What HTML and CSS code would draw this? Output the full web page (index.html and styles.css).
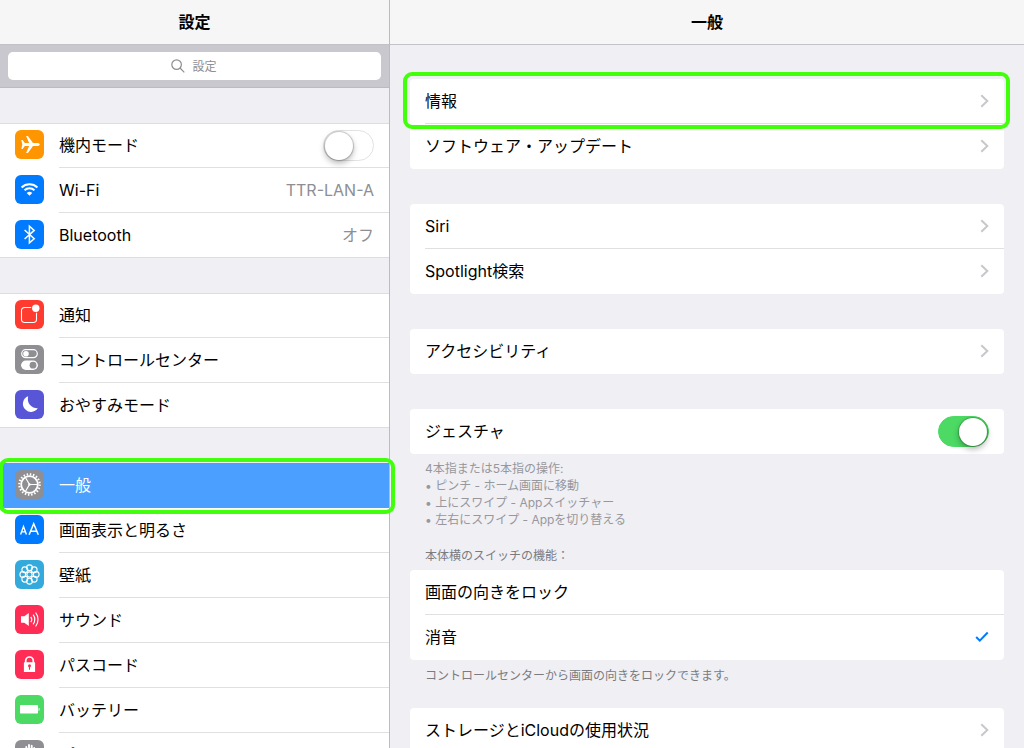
FILE: index.html
```html
<!DOCTYPE html>
<html lang="ja">
<head>
<meta charset="utf-8">
<meta name="viewport" content="width=device-width, initial-scale=1">
<title>設定</title>
<link rel="stylesheet" href="styles.css">
</head>
<body>
<svg class="sprite" aria-hidden="true">
  <symbol id="chevron" viewBox="0 0 9 14"><path d="M1.3 1.2 7.3 7l-6 5.8" fill="none" stroke="#c7c7cc" stroke-width="2"/></symbol>
</svg>
<div class="app">
  <aside class="sidebar">
    <header class="bar"><h1 class="title">設定</h1></header>
    <div class="search">
      <svg class="search-icon" viewBox="0 0 14 14" aria-hidden="true"><circle cx="5.6" cy="5.6" r="4.8"/><path d="m9 9 4.3 4.3"/></svg>
      <input class="search-input" type="search" placeholder="設定" aria-label="設定を検索">
    </div>
    <nav class="groups">
      <ul class="group">
        <li><label class="row">
          <svg class="icon orange" viewBox="0 0 29 29" aria-hidden="true"><path fill="#fff" d="M6.3 10.1h1.3l2.2 3h4.3L11.1 6h1.8l5.1 7.1h4.6c1.4 0 2.1.8 2.1 1.4s-.7 1.4-2.1 1.4H18L12.9 23h-1.8l3-7.1H9.8l-2.2 3H6.3l1-4.4z"/></svg>
          <span class="row-body"><span>機内モード</span><input class="switch" type="checkbox" role="switch"></span>
        </label></li>
        <li><a class="row" href="#wifi">
          <svg class="icon blue" viewBox="0 0 29 29" aria-hidden="true"><g fill="none" stroke="#fff" stroke-width="2"><path d="M6.6 12.5a11.4 11.4 0 0 1 15.8 0"/><path d="M9.5 15.3a7.2 7.2 0 0 1 10 0"/></g><path fill="#fff" d="M11.7 18a4.1 4.1 0 0 1 5.6 0l-2.8 2.8z"/></svg>
          <span class="row-body"><span>Wi-Fi</span><span class="value">TTR-LAN-A</span></span>
        </a></li>
        <li><a class="row" href="#bluetooth">
          <svg class="icon blue" viewBox="0 0 29 29" aria-hidden="true"><path fill="none" stroke="#fff" stroke-width="1.5" d="m9.6 10 9.6 8.7-4.8 4.2V6.2l4.8 4.2L9.6 19"/></svg>
          <span class="row-body"><span>Bluetooth</span><span class="value">オフ</span></span>
        </a></li>
      </ul>
      <ul class="group">
        <li><a class="row" href="#notifications">
          <svg class="icon red" viewBox="0 0 29 29" aria-hidden="true"><path fill="none" stroke="#fff" stroke-width="1.1" d="M16.2 7.5H9.7a3.2 3.2 0 0 0-3.2 3.2v8.6a3.2 3.2 0 0 0 3.2 3.2h8.6a3.2 3.2 0 0 0 3.2-3.2v-6.5"/><circle cx="20.8" cy="8.2" r="3.7" fill="#fff"/></svg>
          <span class="row-body"><span>通知</span></span>
        </a></li>
        <li><a class="row" href="#control-center">
          <svg class="icon gray" viewBox="0 0 29 29" aria-hidden="true"><rect x="6.7" y="4.7" width="15.6" height="8" rx="4" fill="none" stroke="#fff" stroke-width="1.2"/><circle cx="11" cy="8.7" r="2.8" fill="#fff"/><rect x="6.1" y="15.5" width="16.8" height="9.4" rx="4.7" fill="#fff"/><circle cx="18" cy="20.2" r="3.4" fill="#8e8e93"/></svg>
          <span class="row-body"><span>コントロールセンター</span></span>
        </a></li>
        <li><a class="row" href="#do-not-disturb">
          <svg class="icon purple" viewBox="0 0 29 29" aria-hidden="true"><path fill="#fff" d="M13.2 6.2a9.3 9.3 0 0 0 9.6 12 8.1 8.1 0 1 1-9.6-12z"/></svg>
          <span class="row-body"><span>おやすみモード</span></span>
        </a></li>
      </ul>
      <ul class="group">
        <li class="highlight highlight-nav"><a class="row selected" href="#general" aria-current="page">
          <svg class="icon gray" viewBox="0 0 29 29" aria-hidden="true"><g fill="none" stroke="#fff"><circle cx="14.5" cy="14.5" r="10.2" stroke-width="2.2" stroke-dasharray="1.5 1.7044"/><circle cx="14.5" cy="14.5" r="8.3" stroke-width="1.8"/><path stroke-width="1.2" d="M14.5 14.5H22M14.5 14.5 10.7 8M14.5 14.5 10.7 21"/></g><circle cx="14.5" cy="14.5" r="1.2" fill="#fff"/></svg>
          <span class="row-body"><span>一般</span></span>
        </a></li>
        <li><a class="row" href="#display">
          <svg class="icon blue" viewBox="0 0 29 29" aria-hidden="true"><g fill="none" stroke="#fff"><path stroke-width="1.4" d="m5.6 19.5 2.9-8 2.9 8M6.6 16.9h3.8"/><path stroke-width="1.5" d="m14.1 19.8 4.6-11.2 4.6 11.2M15.6 16.2h6.2"/></g></svg>
          <span class="row-body"><span>画面表示と明るさ</span></span>
        </a></li>
        <li><a class="row" href="#wallpaper">
          <svg class="icon cyan" viewBox="0 0 29 29" aria-hidden="true"><g fill="none" stroke="#fff" stroke-width="1.1"><circle cx="14.5" cy="14.5" r="2.6"/><circle cx="14.5" cy="7.8" r="2.9"/><circle cx="19.2" cy="9.8" r="2.9"/><circle cx="21.2" cy="14.5" r="2.9"/><circle cx="19.2" cy="19.2" r="2.9"/><circle cx="14.5" cy="21.2" r="2.9"/><circle cx="9.8" cy="19.2" r="2.9"/><circle cx="7.8" cy="14.5" r="2.9"/><circle cx="9.8" cy="9.8" r="2.9"/></g></svg>
          <span class="row-body"><span>壁紙</span></span>
        </a></li>
        <li><a class="row" href="#sounds">
          <svg class="icon pink" viewBox="0 0 29 29" aria-hidden="true"><path fill="#fff" d="M6 11.3h3.3l4.5-3.2v12.8l-4.5-3.2H6z"/><g fill="none" stroke="#fff" stroke-width="1.2"><path d="M15.8 11.8a4.6 4.6 0 0 1 0 5.4"/><path d="M18.1 9.7a8 8 0 0 1 0 9.6"/><path d="M20.6 7.5a11.4 11.4 0 0 1 0 14"/></g></svg>
          <span class="row-body"><span>サウンド</span></span>
        </a></li>
        <li><a class="row" href="#passcode">
          <svg class="icon pink" viewBox="0 0 29 29" aria-hidden="true"><path fill="none" stroke="#fff" stroke-width="1.7" d="M10.7 13v-2.2a3.8 3.8 0 0 1 7.6 0V13"/><rect x="8.9" y="12.3" width="11.2" height="9.7" rx=".6" fill="#fff"/><circle cx="14.5" cy="15.8" r="1.5" fill="#ff2d55"/><path stroke="#ff2d55" stroke-width="1.1" d="M14.5 16v3.8"/></svg>
          <span class="row-body"><span>パスコード</span></span>
        </a></li>
        <li><a class="row" href="#battery">
          <svg class="icon green" viewBox="0 0 29 29" aria-hidden="true"><rect x="5" y="10" width="18" height="8.6" rx=".8" fill="#fff"/><path fill="#fff" d="M23.6 12.5c1.4.4 1.4 3.2 0 3.6z"/></svg>
          <span class="row-body"><span>バッテリー</span></span>
        </a></li>
        <li><a class="row" href="#privacy">
          <svg class="icon gray" viewBox="0 0 29 29" aria-hidden="true"><g fill="none" stroke="#fff" stroke-width="1.9" stroke-linecap="round"><path d="M11.3 7v8M14 5v10M16.7 5.8V15M19.2 8v9M8.2 14l3 4"/></g><path fill="#fff" d="M10.3 14h9.8v4c0 4-2 6-5 6s-4-2-6-6z"/></svg>
          <span class="row-body"><span>プライバシー</span></span>
        </a></li>
      </ul>
    </nav>
  </aside>
  <main class="detail">
    <header class="bar"><h2 class="title">一般</h2></header>
    <div class="content">
      <ul class="card">
        <li class="highlight highlight-card"><a class="item" href="#about">情報<svg class="chevron" aria-hidden="true"><use href="#chevron"/></svg></a></li>
        <li><a class="item" href="#software-update">ソフトウェア・アップデート<svg class="chevron" aria-hidden="true"><use href="#chevron"/></svg></a></li>
      </ul>
      <ul class="card">
        <li><a class="item" href="#siri">Siri<svg class="chevron" aria-hidden="true"><use href="#chevron"/></svg></a></li>
        <li><a class="item" href="#spotlight">Spotlight検索<svg class="chevron" aria-hidden="true"><use href="#chevron"/></svg></a></li>
      </ul>
      <ul class="card">
        <li><a class="item" href="#accessibility">アクセシビリティ<svg class="chevron" aria-hidden="true"><use href="#chevron"/></svg></a></li>
      </ul>
      <section class="section">
        <ul class="card">
          <li><label class="item">ジェスチャ<input class="switch" type="checkbox" role="switch" checked></label></li>
        </ul>
        <div class="note light">
          <p>4本指または5本指の操作:</p>
          <p>• ピンチ - ホーム画面に移動</p>
          <p>• 上にスワイプ - Appスイッチャー</p>
          <p>• 左右にスワイプ - Appを切り替える</p>
        </div>
      </section>
      <section class="section side-switch">
        <h3 class="note heading" id="side-switch">本体横のスイッチの機能：</h3>
        <ul class="card" role="radiogroup" aria-labelledby="side-switch">
          <li><label class="item">画面の向きをロック<input class="choice" type="radio" name="side"><svg class="check" viewBox="0 0 14 12" aria-hidden="true"><path d="m1.2 6 3.6 3.6L12.7 1.5"/></svg></label></li>
          <li><label class="item">消音<input class="choice" type="radio" name="side" checked><svg class="check" viewBox="0 0 14 12" aria-hidden="true"><path d="m1.2 6 3.6 3.6L12.7 1.5"/></svg></label></li>
        </ul>
        <p class="note">コントロールセンターから画面の向きをロックできます。</p>
      </section>
      <ul class="card storage">
        <li><a class="item" href="#storage">ストレージとiCloudの使用状況<svg class="chevron" aria-hidden="true"><use href="#chevron"/></svg></a></li>
      </ul>
    </div>
  </main>
</div>
</body>
</html>
```
FILE: styles.css
```css
* {
  box-sizing: border-box;
}

body {
  margin: 0;
  font-family: Inter, "Noto Sans CJK JP", sans-serif;
  font-size: 16px;
  line-height: 24px;
  color: #000;
  background: #efeff4;
}

h1, h2, h3, p, ul {
  margin: 0;
  padding: 0;
}

ul {
  list-style: none;
}

a {
  color: inherit;
  text-decoration: none;
}

.sprite {
  display: none;
}

.app {
  display: grid;
  grid-template-columns: 390px 1fr;
  height: 100vh;
  overflow: hidden;
}

.sidebar {
  position: relative;
  z-index: 1;
  border-right: 1px solid #bcbbc1;
}

.bar {
  display: flex;
  align-items: center;
  justify-content: center;
  height: 45px;
  background: #f6f6f6;
  border-bottom: 1px solid #c3c2c7;
}

.title {
  font-size: 16px;
  font-weight: 700;
}

/* Search */
.search {
  position: relative;
  padding: 7px 8px;
  background: #c9c8ce;
  border-bottom: 1px solid #bcbbc1;
}

.search-icon {
  position: absolute;
  top: 14px;
  left: calc(50% - 24px);
  width: 14px;
  height: 14px;
  fill: none;
  stroke: #8e8e93;
  stroke-width: 1.2;
}

.search-input {
  display: block;
  width: 100%;
  height: 28px;
  padding: 0 0 0 32px;
  border: 0;
  border-radius: 5px;
  background: #fff;
  font: inherit;
  font-size: 12px;
  text-align: center;
}

.search-input::placeholder {
  color: #8e8e93;
  opacity: 1;
}

/* Sidebar rows */
.groups {
  display: grid;
  gap: 35px;
  padding-top: 35px;
}

.group {
  background: #fff;
  box-shadow: inset 0 1px #dddde1, inset 0 -1px #dddde1;
}

.row {
  display: flex;
  gap: 15px;
  padding-left: 15px;
}

.row-body {
  display: flex;
  flex: 1;
  align-items: center;
  justify-content: space-between;
  height: 45px;
  padding-right: 15px;
  border-bottom: 1px solid #e0e0e2;
}

.group li:last-child .row-body {
  border-bottom-color: transparent;
}

.selected {
  color: #fff;
  background: #4b9fff;
}

.selected .row-body {
  border-bottom-color: transparent;
}

.value {
  color: #8e8e93;
}

.icon {
  flex: none;
  width: 29px;
  height: 29px;
  margin-top: 7px;
  border-radius: 6px;
}

.orange { background: #ff9500; }
.blue { background: #007aff; }
.red { background: #ff3b30; }
.gray { background: #8e8e93; }
.purple { background: #5856d6; }
.cyan { background: #34aadc; }
.pink { background: #ff2d55; }
.green { background: #4cd964; }

/* Switch */
.switch {
  appearance: none;
  flex: none;
  display: flex;
  width: 51px;
  height: 31px;
  margin: 0;
  padding: 1px;
  border: 1px solid #e2e2e2;
  border-radius: 16px;
  background: #fff;
}

.switch::before {
  content: "";
  width: 28px;
  height: 28px;
  border-radius: 50%;
  background: #fff;
  box-shadow: 0 0 1px 1px rgba(0, 0, 0, 0.2), 0 3px 6px rgba(0, 0, 0, 0.3);
}

.switch:checked {
  justify-content: flex-end;
  border-color: #4cd964;
  background: #4cd964;
}

/* Detail pane */
.content {
  display: grid;
  gap: 35px;
  padding: 34px 20px;
}

.card {
  background: #fff;
  border-radius: 4px;
}

.item {
  position: relative;
  display: flex;
  align-items: center;
  justify-content: space-between;
  height: 45px;
  padding: 0 15px 1px;
}

.card li:not(:last-child) {
  background: linear-gradient(#e0e0e2, #e0e0e2) 15px 100% / 100% 1px no-repeat;
}

.chevron {
  width: 9px;
  height: 14px;
}

.choice {
  position: absolute;
  inset: 0;
  margin: 0;
  opacity: 0;
}

.check {
  visibility: hidden;
  width: 14px;
  height: 12px;
  fill: none;
  stroke: #007aff;
  stroke-width: 2;
}

.choice:checked + .check {
  visibility: visible;
}

.note {
  padding: 7px 15px 0;
  font-size: 12px;
  font-weight: 400;
  line-height: 17px;
  color: #7b7b80;
}

.light {
  padding-top: 6px;
  color: #97979c;
}

.heading {
  padding: 0 15px 6px;
}

.side-switch {
  margin-top: -16px;
}

.storage {
  margin-top: -11px;
}

/* Callout frames */
.highlight {
  position: relative;
}

.highlight::after {
  content: "";
  position: absolute;
  z-index: 1;
  border: 4px solid #42ff0c;
  border-radius: 9px;
  pointer-events: none;
}

.highlight-nav::after {
  inset: -5px -6px -6px -1px;
}

.highlight-card::after {
  inset: -7px -6px -5px -7px;
}
```
